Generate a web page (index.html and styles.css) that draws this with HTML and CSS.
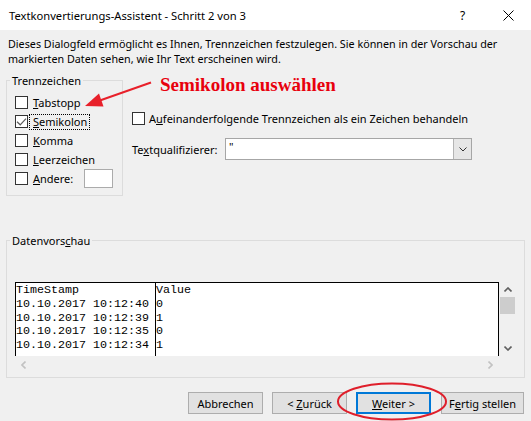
FILE: index.html
```html
<!DOCTYPE html>
<html lang="de">
<head>
<meta charset="utf-8">
<title>Textkonvertierungs-Assistent</title>
<link rel="stylesheet" href="styles.css">
</head>
<body>
<div class="dialog">
  <div class="titlebar">
    <span class="title">Textkonvertierungs-Assistent - Schritt 2 von 3</span>
    <span class="tb-btn help">?</span>
    <span class="tb-btn close"><svg width="11" height="11" viewBox="0 0 11 11"><path d="M0.5 0.5L10.5 10.5M10.5 0.5L0.5 10.5" stroke="#000" stroke-width="1" fill="none"/></svg></span>
  </div>

  <p class="desc">Dieses Dialogfeld ermöglicht es Ihnen, Trennzeichen festzulegen. Sie können in der Vorschau der<br>markierten Daten sehen, wie Ihr Text erscheinen wird.</p>

  <div class="options">
    <fieldset class="group delims">
      <legend><span>Trennzeichen</span></legend>
      <div class="rows">
        <div class="cb"><span class="box"></span><span class="lbl"><u>T</u>abstopp</span></div>
        <div class="cb"><span class="box"><svg width="13" height="13" viewBox="0 0 13 13"><path d="M2 6.8L5.2 9.8L11 3.6" stroke="#5b5b5b" stroke-width="1.2" fill="none"/></svg></span><span class="lbl focus"><u>S</u>emikolon</span></div>
        <div class="cb"><span class="box"></span><span class="lbl"><u>K</u>omma</span></div>
        <div class="cb"><span class="box"></span><span class="lbl"><u>L</u>eerzeichen</span></div>
        <div class="cb other"><span class="box"></span><span class="lbl"><u>A</u>ndere:</span><span class="textbox"></span></div>
      </div>
    </fieldset>

    <div class="right">
      <div class="cb consec"><span class="box"></span><span class="lbl">A<u>u</u>feinanderfolgende Trennzeichen als ein Zeichen behandeln</span></div>
      <div class="qual">
        <span class="qual-label">Te<u>x</u>tqualifizierer:</span>
        <div class="select">
          <span class="val">"</span>
          <span class="drop"><svg width="8" height="5" viewBox="0 0 8 5"><path d="M0.5 0.5L4 4L7.5 0.5" stroke="#333" stroke-width="1" fill="none"/></svg></span>
        </div>
      </div>
    </div>
  </div>

  <fieldset class="group preview">
    <legend><span>Datenvors<u>c</u>hau</span></legend>
    <div class="pv">
      <div class="pv-main">
        <div class="grid">
          <div class="col c1">TimeStamp
10.10.2017 10:12:40
10.10.2017 10:12:39
10.10.2017 10:12:35
10.10.2017 10:12:34</div>
          <div class="col c2">Value
0
1
0
1</div>
        </div>
        <div class="vscroll">
          <div class="sb-btn up"><svg width="8" height="5" viewBox="0 0 8 5"><path d="M0.5 4.5L4 1L7.5 4.5" stroke="#606060" stroke-width="1.6" fill="none"/></svg></div>
          <div class="thumb"></div>
          <div class="sb-space"></div>
          <div class="sb-btn down"><svg width="8" height="5" viewBox="0 0 8 5"><path d="M0.5 0.5L4 4L7.5 0.5" stroke="#606060" stroke-width="1.6" fill="none"/></svg></div>
        </div>
      </div>
      <div class="hscroll">
        <div class="hs-track">
          <div class="sb-btn"><svg width="5" height="8" viewBox="0 0 5 8"><path d="M4.5 0.5L1 4L4.5 7.5" stroke="#c2c2c2" stroke-width="1.6" fill="none"/></svg></div>
          <div class="sb-btn"><svg width="5" height="8" viewBox="0 0 5 8"><path d="M0.5 0.5L4 4L0.5 7.5" stroke="#c2c2c2" stroke-width="1.6" fill="none"/></svg></div>
        </div>
        <div class="corner"></div>
      </div>
    </div>
  </fieldset>

  <div class="buttons">
    <span class="btn"><span>Abbrechen</span></span>
    <span class="btn"><span>&lt; <u>Z</u>urück</span></span>
    <span class="btn default"><span><u>W</u>eiter &gt;</span></span>
    <span class="btn wide"><span>F<u>e</u>rtig stellen</span></span>
  </div>

  <div class="note">Semikolon auswählen</div>
  <svg class="marks" width="531" height="421" viewBox="0 0 531 421">
    <path d="M151 82.5L97 101.5" stroke="#e8202a" stroke-width="2" fill="none"/>
    <path d="M85 106L99 93.5L103.5 106.5Z" fill="#e8202a"/>
    <ellipse cx="392" cy="401.5" rx="54" ry="18" stroke="#df1f2b" stroke-width="2" fill="none"/>
  </svg>
</div>
</body>
</html>
```

FILE: styles.css
```css
* { box-sizing: border-box; }
html, body { margin: 0; padding: 0; }
body {
  width: 531px;
  height: 421px;
  overflow: hidden;
  background: #f0f0f0;
  font-family: "Noto Sans", sans-serif;
  font-size: 11px;
  color: #000;
}
u { text-decoration: underline; text-underline-offset: 1px; text-decoration-thickness: 1px; }

.dialog { position: relative; width: 531px; height: 421px; }

.titlebar {
  height: 30px;
  background: #fff;
  display: flex;
  align-items: center;
}
.title { flex: 1; padding-left: 9px; line-height: 15px; font-size: 11.2px; }
.tb-btn { height: 30px; display: flex; align-items: center; justify-content: center; }
.help { width: 45px; font-size: 12px; }
.close { width: 46px; }

.desc { margin: 0; padding: 7px 8px 0; line-height: 15px; white-space: nowrap; font-size: 10.75px; }

.options { display: flex; padding: 0 6px; margin-top: 6px; }

.group {
  margin: 0;
  padding: 0;
  border: 1px solid #dcdcdc;
  min-width: 0;
}
.group legend { margin-left: 3px; padding: 0 2px; line-height: 15px; }

.delims { width: 117px; padding-bottom: 7px; }
.rows { padding: 5px 9px 0 8px; }

.cb { display: flex; align-items: center; height: 19px; }
.box {
  width: 13px;
  height: 13px;
  flex: none;
  border: 1px solid #333;
  background: #fff;
  margin-right: 5px;
  position: relative;
}
.box svg { position: absolute; left: -1px; top: -1px; }
.lbl { white-space: nowrap; line-height: 15px; }
.focus {
  border: 1px dotted #000;
  margin-left: -4px;
  padding: 0 2px 0 3px;
  line-height: 14px;
}
.textbox {
  margin-left: auto;
  width: 29px;
  height: 19px;
  background: #fff;
  border: 1px solid #ababab;
}

.right { margin-left: 9px; padding-top: 38px; }
.consec { height: 15px; }
.consec .box { margin-right: 4px; }

.qual { display: flex; align-items: center; margin-top: 12px; height: 22px; }
.qual-label { width: 93px; flex: none; }
.select {
  width: 247px;
  height: 22px;
  display: flex;
  background: #fff;
  border: 1px solid #a6a6a6;
}
.val { flex: 1; padding-left: 3px; line-height: 15px; }
.drop {
  width: 18px;
  background: #e6e6e6;
  border-left: 1px solid #b4b4b4;
  display: flex;
  align-items: center;
  justify-content: center;
}

.preview { margin: 37px 6px 0; }
.pv { margin: 34px 8px 4px 8px; }
.pv-main { display: flex; height: 74px; }
.grid {
  flex: 1;
  display: flex;
  background: #fff;
  border: 1px solid #000;
  border-bottom: 0;
  overflow: hidden;
}
.col {
  font-family: "Liberation Mono", monospace;
  font-size: 11.67px;
  line-height: 13.75px;
  white-space: pre;
  padding-top: 1px;
}
.c1 { width: 140px; border-right: 1px solid #000; }
.c2 { flex: 1; }

.vscroll { width: 17px; display: flex; flex-direction: column; }
.sb-btn { display: flex; align-items: center; justify-content: center; }
.up { height: 15px; }
.thumb { height: 17px; margin: 0 1px; background: #cdcdcd; }
.sb-space { flex: 1; }
.down { height: 16px; }

.hscroll { display: flex; height: 17px; }
.hs-track { flex: 1; display: flex; justify-content: space-between; }
.hs-track .sb-btn { width: 17px; }
.corner { width: 17px; }

.buttons {
  display: flex;
  justify-content: flex-end;
  gap: 9px;
  padding-right: 7px;
  margin-top: 14px;
}
.btn {
  width: 75px;
  height: 22px;
  display: flex;
  align-items: center;
  justify-content: center;
  background: #e1e1e1;
  border: 1px solid #adadad;
  white-space: nowrap;
}
.btn.default { border: 2px solid #0078d7; }
.btn.wide { width: 83px; margin-left: 1px; }

.note {
  position: absolute;
  left: 160px;
  top: 75px;
  font-family: "Liberation Serif", serif;
  font-weight: bold;
  font-size: 19px;
  line-height: 19px;
  color: #e8000d;
  white-space: nowrap;
}
.marks { position: absolute; left: 0; top: 0; pointer-events: none; }
```
